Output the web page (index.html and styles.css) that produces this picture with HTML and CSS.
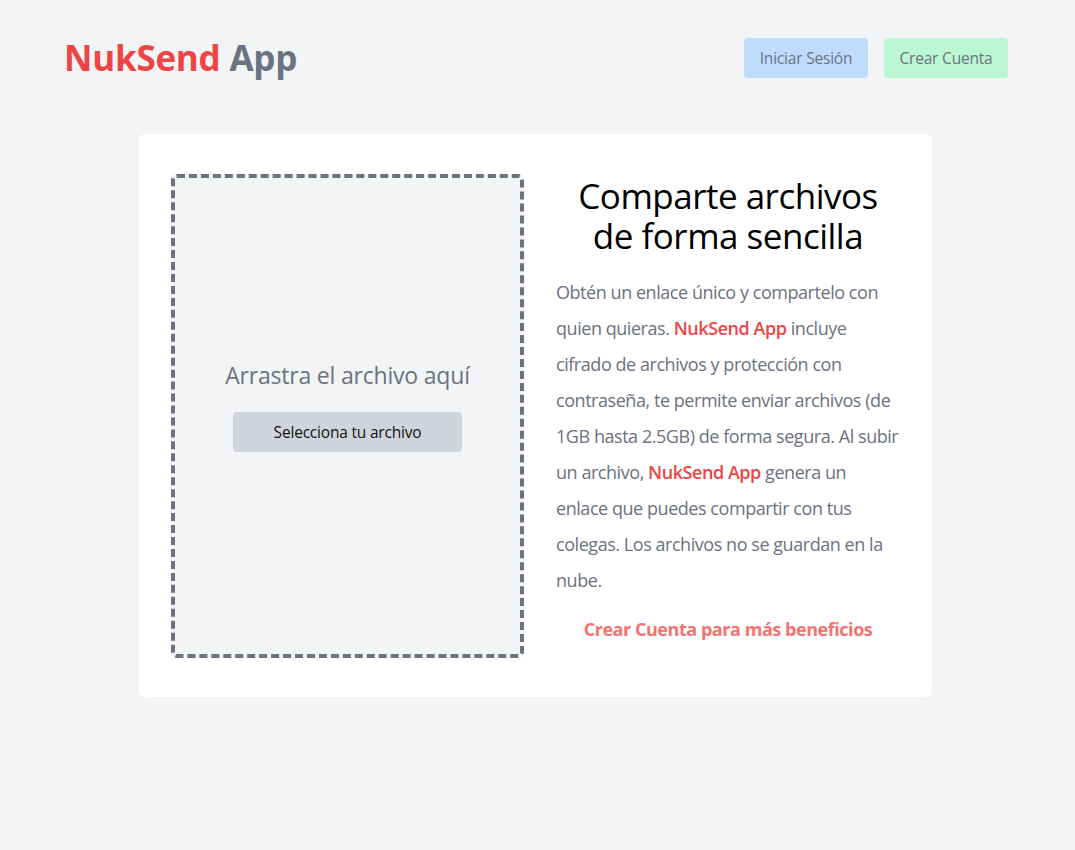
FILE: index.html
```html
<!DOCTYPE html>
<html lang="es">
<head>
<meta charset="utf-8">
<title>NukSend App</title>
<link rel="stylesheet" href="styles.css">
</head>
<body>
<header class="header">
  <a class="logo" href="#"><span class="logo-red">NukSend</span> <span class="logo-gray">App</span></a>
  <nav class="nav">
    <a class="btn btn-blue" href="#">Iniciar Sesión</a>
    <a class="btn btn-green" href="#">Crear Cuenta</a>
  </nav>
</header>
<main class="main">
  <div class="card">
    <div class="dropzone">
      <p class="drop-text">Arrastra el archivo aquí</p>
      <button class="select-btn" type="button">Selecciona tu archivo</button>
    </div>
    <div class="info">
      <h2 class="title">Comparte archivos<br>de forma sencilla</h2>
      <p class="desc">Obtén un enlace único y compartelo con quien quieras. <span class="brand">NukSend App</span> incluye cifrado de archivos y protección con contraseña, te permite enviar archivos (de 1GB hasta 2.5GB) de forma segura. Al subir un archivo, <span class="brand">NukSend App</span> genera un enlace que puedes compartir con tus colegas. Los archivos no se guardan en la nube.</p>
      <a class="cta" href="#">Crear Cuenta para más beneficios</a>
    </div>
  </div>
</main>
</body>
</html>
```
FILE: styles.css
```css
* { box-sizing: border-box; }
html, body { margin: 0; padding: 0; }
body {
  background: #f3f4f6;
  font-family: "Open Sans", "Noto Sans", sans-serif;
  min-height: 100vh;
}
a { text-decoration: none; }
.header {
  display: flex;
  justify-content: space-between;
  align-items: center;
  padding: 38px 67px 0 64px;
}
.logo {
  font-size: 35px;
  font-weight: 700;
  line-height: 40px;
  letter-spacing: -0.25px;
}
.logo-red { color: #ef4444; }
.logo-gray { color: #6b7280; }
.nav { display: flex; gap: 16px; }
.btn {
  display: block;
  height: 40px;
  line-height: 40px;
  padding: 0;
  border-radius: 4px;
  font-size: 15.5px;
  color: #6b7280;
  letter-spacing: -0.2px;
  width: 124px;
  text-align: center;
}
.btn-blue { background: #bfdbfe; }
.btn-green { background: #bbf7d0; }
.main { padding: 56px 0 0 139px; }
.card {
  width: 793px;
  background: #fff;
  border-radius: 6px;
  padding: 40px 32px 39px;
  display: grid;
  grid-template-columns: 353px 1fr;
  gap: 32px;
}
.dropzone {
  height: 484px;
  border: 4px dashed #6b7280;
  border-radius: 6px;
  background: #f3f4f6;
  display: flex;
  flex-direction: column;
  align-items: center;
  justify-content: center;
  padding-bottom: 22px;
}
.drop-text {
  margin: 0 0 21px;
  font-size: 23px;
  color: #6b7280;
  letter-spacing: -0.2px;
}
.select-btn {
  width: 229px;
  height: 40px;
  border: none;
  border-radius: 4px;
  background: #d1d5db;
  font-family: inherit;
  font-size: 15.5px;
  color: #111;
  letter-spacing: -0.2px;
}
.info { display: flex; flex-direction: column; align-items: center; }
.title {
  margin: 2px 0 0;
  font-size: 35px;
  font-weight: 400;
  line-height: 40px;
  text-align: center;
  color: #000;
  letter-spacing: -0.5px;
}
.desc {
  margin: 18px 0 0;
  font-size: 18px;
  line-height: 36px;
  color: #6b7280;
  letter-spacing: -0.45px;
  align-self: stretch;
}
.brand { color: #ef4444; font-weight: 600; }
.cta {
  margin-top: 19px;
  font-size: 18px;
  font-weight: 700;
  color: #f87171;
  letter-spacing: -0.45px;
}
```
